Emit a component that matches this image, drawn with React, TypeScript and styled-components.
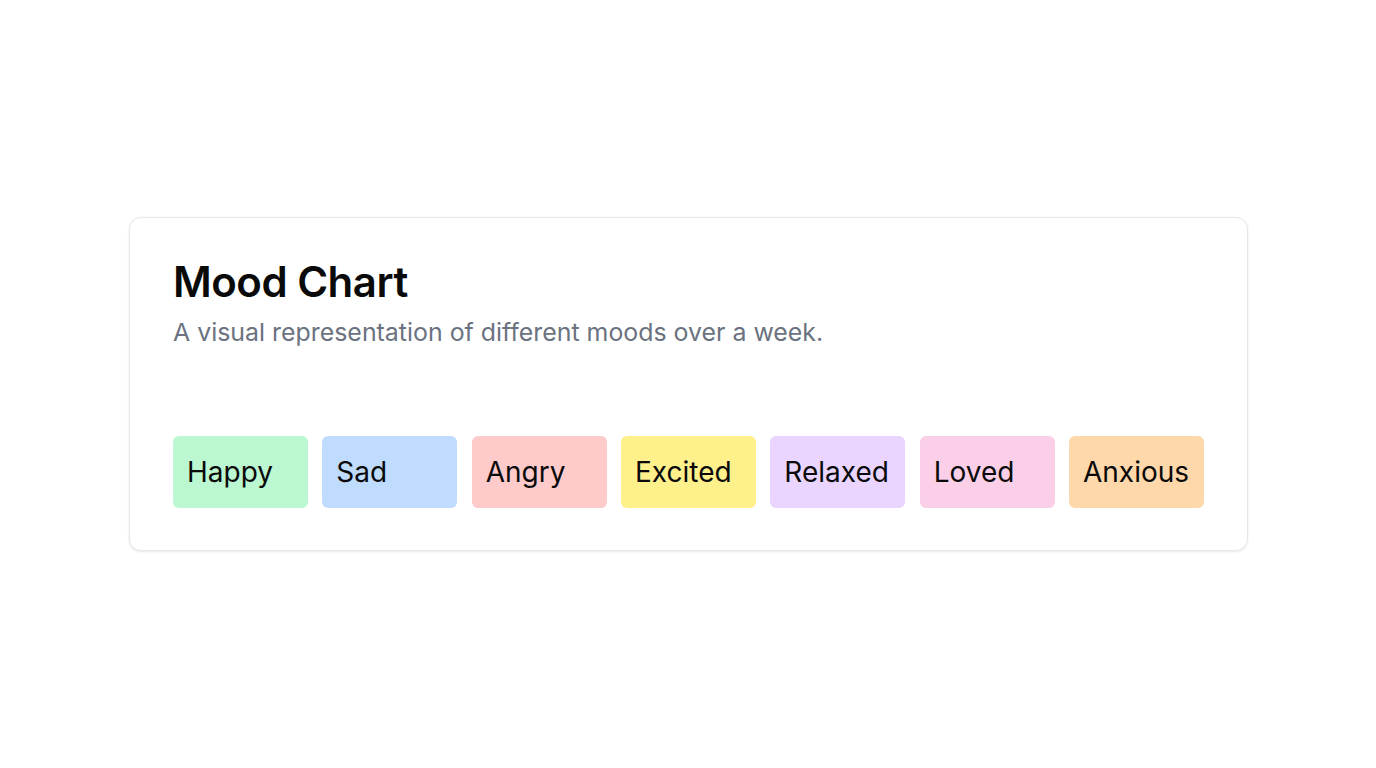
import React from "react";
import styled, { createGlobalStyle } from "styled-components";

const Global = createGlobalStyle`
  * { box-sizing: border-box; }
  html, body { margin: 0; padding: 0; background: #ffffff; }
  body { font-family: Inter, "Noto Sans", sans-serif; color: #0a0a0a; }
`;

const Page = styled.main`
  min-height: 100vh;
  display: flex;
  align-items: center;
  justify-content: center;
  padding-left: 1px;
`;

const Card = styled.section`
  width: 1119px;
  border: 1px solid #e5e7eb;
  border-radius: 12px;
  background: #ffffff;
  box-shadow: 0 1px 3px rgba(0, 0, 0, 0.06), 0 1px 2px rgba(0, 0, 0, 0.04);
  padding: 40px 43px 42px;
  display: flex;
  flex-direction: column;
`;

const Header = styled.header`
  display: flex;
  flex-direction: column;
  gap: 10px;
`;

const Title = styled.h1`
  margin: 0;
  font-size: 42px;
  line-height: 48px;
  font-weight: 600;
  letter-spacing: -0.5px;
  color: #0a0a0a;
`;

const Subtitle = styled.p`
  margin: 0;
  font-size: 24.9px;
  line-height: 32px;
  color: #6b7280;
`;

const Grid = styled.div`
  margin-top: 88px;
  display: grid;
  grid-template-columns: repeat(7, 1fr);
  column-gap: 14.33px;
`;

const Tile = styled.div<{ $bg: string }>`
  height: 72px;
  border-radius: 6px;
  background: ${(p) => p.$bg};
  display: flex;
  align-items: center;
  padding: 0 14px;
  font-size: 28px;
  color: #0a0a0a;
`;

const moods = [
  { name: "Happy", bg: "#bbf7d0" },
  { name: "Sad", bg: "#bfdbfe" },
  { name: "Angry", bg: "#fecaca" },
  { name: "Excited", bg: "#fef08a" },
  { name: "Relaxed", bg: "#e9d5ff" },
  { name: "Loved", bg: "#fbcfe8" },
  { name: "Anxious", bg: "#fed7aa" },
];

export default function App() {
  return (
    <>
      <Global />
      <Page>
        <Card>
          <Header>
            <Title>Mood Chart</Title>
            <Subtitle>A visual representation of different moods over a week.</Subtitle>
          </Header>
          <Grid>
            {moods.map((m) => (
              <Tile key={m.name} $bg={m.bg}>
                {m.name}
              </Tile>
            ))}
          </Grid>
        </Card>
      </Page>
    </>
  );
}
